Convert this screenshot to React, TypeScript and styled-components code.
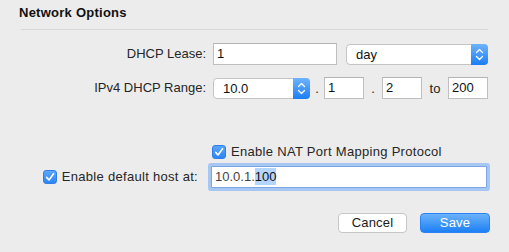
import React from 'react';
import styled, { createGlobalStyle } from 'styled-components';

const GlobalStyle = createGlobalStyle`
    html, body {
        margin: 0;
        padding: 0;
        background: #ececec;
    }
    body {
        font-family: 'Liberation Sans', Arial, sans-serif;
        font-size: 13px;
        color: #262626;
    }
`;

const Panel = styled.div`
    width: 509px;
    height: 252px;
    background: #ececec;
    display: flex;
    flex-direction: column;
`;

const Header = styled.div`
    padding: 5px 0 0 19px;
    font-weight: 700;
    line-height: 16px;
    letter-spacing: 0.25px;
    color: #111;
`;

const Divider = styled.div`
    height: 1px;
    background: #d7d7d7;
    margin: 8px 21px 0 21px;
`;

const Row = styled.div<{ $mt: number }>`
    display: grid;
    grid-template-columns: 206px 275px;
    column-gap: 7px;
    align-items: center;
    margin-top: ${(p) => p.$mt}px;
`;

const Label = styled.div<{ $pr?: number }>`
    display: flex;
    justify-content: flex-end;
    align-items: center;
    gap: 4px;
    padding-right: ${(p) => p.$pr || 0}px;
    line-height: 16px;
`;

const Controls = styled.div`
    display: flex;
    align-items: center;
`;

const Field = styled.div<{ $width?: number }>`
    box-sizing: border-box;
    height: 22px;
    width: ${(p) => (p.$width ? `${p.$width}px` : 'auto')};
    flex: ${(p) => (p.$width ? 'none' : '1')};
    background: #fff;
    border: 1px solid #bfbfbf;
    border-top-color: #b3b3b3;
    padding: 0 3px;
    line-height: 20px;
    color: #111;
`;

const FocusField = styled(Field)`
    width: calc(100% + 1px);
    margin-left: -2px;
    border-color: #7aa7e4;
    border-radius: 1px;
    box-shadow: 0 0 0 3px #a6c7f2;
    color: #444;
    .sel {
        background: #b4d5fd;
        color: #111;
        display: inline-block;
        line-height: 17px;
    }
`;

const Select = styled.div<{ $width?: number; $ml?: number }>`
    box-sizing: border-box;
    position: relative;
    height: 21px;
    width: ${(p) => (p.$width ? `${p.$width}px` : 'auto')};
    flex: ${(p) => (p.$width ? 'none' : '1')};
    margin-left: ${(p) => p.$ml || 0}px;
    background: #fff;
    border: 1px solid #c4c4c4;
    border-radius: 4px;
    padding: 0 20px 0 9px;
    line-height: 19px;
    color: #111;
`;

const Stepper = styled.div`
    position: absolute;
    top: -1px;
    right: -1px;
    bottom: -1px;
    width: 17px;
    border-radius: 0 4px 4px 0;
    background: linear-gradient(#6db4fb, #1b7ef6);
    display: flex;
    align-items: center;
    justify-content: center;
`;

const Sep = styled.div<{ $width: number }>`
    width: ${(p) => p.$width}px;
    text-align: center;
    color: #222;
`;

const Box = styled.div<{ $ml?: number }>`
    width: 14px;
    height: 14px;
    box-sizing: border-box;
    margin-left: ${(p) => p.$ml || 0}px;
    margin-right: 1px;
    border-radius: 3px;
    background: linear-gradient(#5aa6fa, #2d85f5);
    border: 1px solid #2f7fe6;
    display: flex;
    align-items: center;
    justify-content: center;
    flex: none;
`;

const CheckText = styled.span`
    letter-spacing: 0.3px;
`;

const CheckRow = styled.div`
    display: flex;
    align-items: center;
    gap: 4px;
    line-height: 16px;
`;

const Buttons = styled.div`
    display: flex;
    justify-content: flex-end;
    gap: 13px;
    padding-right: 19px;
    margin-top: 25px;
`;

const Button = styled.div<{ $primary?: boolean }>`
    box-sizing: border-box;
    width: ${(p) => (p.$primary ? 70 : 69)}px;
    height: 20px;
    border-radius: 4px;
    text-align: center;
    line-height: 18px;
    letter-spacing: 0.2px;
    border: 1px solid ${(p) => (p.$primary ? '#2b83f3' : '#c6c6c6')};
    background: ${(p) => (p.$primary ? 'linear-gradient(#6bb2fa, #1d80f6)' : '#fff')};
    color: ${(p) => (p.$primary ? '#fff' : '#1a1a1a')};
`;

function Check({ ml }: { ml?: number }) {
    return (
        <Box $ml={ml}>
            <svg width='12' height='12' viewBox='0 0 12 12'>
                <path d='M2.6 6.4 L5 8.9 L9.6 2.8' fill='none' stroke='#fff' strokeWidth='1.6' strokeLinecap='round' strokeLinejoin='round' />
            </svg>
        </Box>
    );
}

function Arrows() {
    return (
        <Stepper>
            <svg width='9' height='13' viewBox='0 0 9 13'>
                <path d='M1.5 4.5 L4.5 1.5 L7.5 4.5 M1.5 8.5 L4.5 11.5 L7.5 8.5' fill='none' stroke='#fff' strokeWidth='1.3' strokeLinecap='round' strokeLinejoin='round' />
            </svg>
        </Stepper>
    );
}

export default function App() {
    return (
        <Panel>
            <GlobalStyle />
            <Header>Network Options</Header>
            <Divider />
            <Row $mt={13}>
                <Label>DHCP Lease:</Label>
                <Controls>
                    <Field $width={124}>1</Field>
                    <Select $ml={9}>
                        day
                        <Arrows />
                    </Select>
                </Controls>
            </Row>
            <Row $mt={12}>
                <Label>IPv4 DHCP Range:</Label>
                <Controls>
                    <Select $width={97}>
                        10.0
                        <Arrows />
                    </Select>
                    <Sep $width={14}>.</Sep>
                    <Field $width={40}>1</Field>
                    <Sep $width={18}>.</Sep>
                    <Field $width={40}>2</Field>
                    <Sep $width={26}>to</Sep>
                    <Field $width={40}>200</Field>
                </Controls>
            </Row>
            <Row $mt={45}>
                <div />
                <CheckRow>
                    <Check ml={-1} />
                    <CheckText>Enable NAT Port Mapping Protocol</CheckText>
                </CheckRow>
            </Row>
            <Row $mt={6}>
                <Label $pr={8}>
                    <Check />
                    <CheckText>Enable default host at:</CheckText>
                </Label>
                <FocusField>
                    10.0.1.<span className='sel'>100</span>
                </FocusField>
            </Row>
            <Buttons>
                <Button>Cancel</Button>
                <Button $primary>Save</Button>
            </Buttons>
        </Panel>
    );
}
